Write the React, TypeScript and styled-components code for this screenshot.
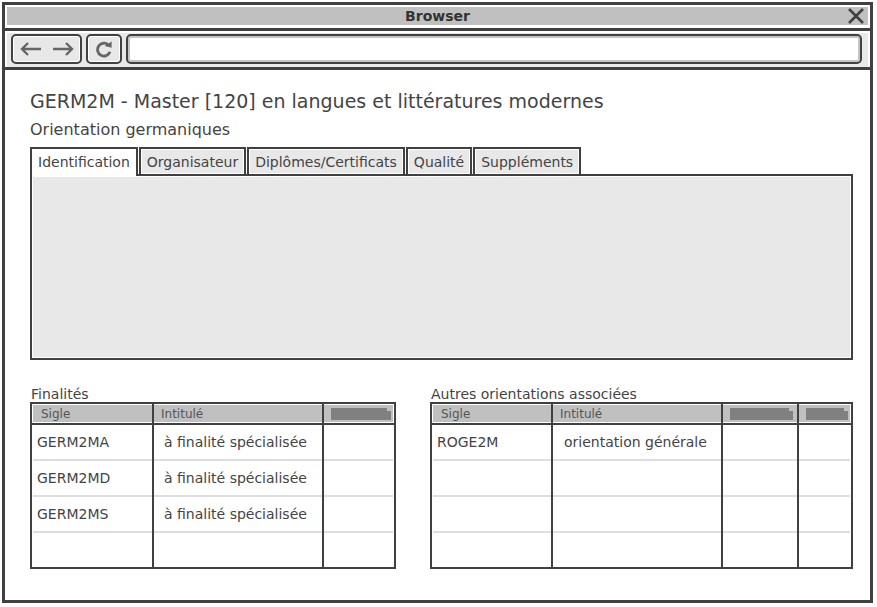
import React from 'react';
import styled, { createGlobalStyle } from 'styled-components';

const GlobalStyle = createGlobalStyle`
  html, body {
    margin: 0;
    padding: 0;
    background: #fff;
    font-family: "DejaVu Sans", Verdana, sans-serif;
    color: #444;
  }
`;

const DARK = '#404040';

const SFrame = styled.div`
  margin: 2px;
  width: 871px;
  height: 601px;
  box-sizing: border-box;
  border: 3px solid ${DARK};
  display: flex;
  flex-direction: column;
  background: #fff;
`;

const STitleBar = styled.div`
  padding: 2px 2px 3px;
  border-bottom: 3px solid ${DARK};
`;

const STitleInner = styled.div`
  height: 18px;
  background: #c0c0c0;
  display: grid;
  grid-template-columns: 1fr auto 1fr;
  align-items: center;
  font-size: 14px;
  font-weight: bold;
  color: #333;
`;

const SClose = styled.svg`
  justify-self: end;
  margin-right: 3px;
`;

const SNavBar = styled.div`
  padding: 2px 2px 0;
  border-bottom: 3px solid ${DARK};
`;

const SNavInner = styled.div`
  height: 34px;
  box-sizing: border-box;
  background: #e8e8e8;
  padding: 1px 6px 3px 4px;
  display: flex;
  gap: 4px;
`;

const SNavButton = styled.div<{ $w: number }>`
  width: ${({ $w }) => $w}px;
  height: 30px;
  box-sizing: border-box;
  border: 2px solid ${DARK};
  border-radius: 5px;
  background: #e8e8e8;
  box-shadow: inset 0 0 0 1px #fff;
  display: flex;
  align-items: center;
  justify-content: center;
  gap: 10px;
`;

const SUrl = styled.div`
  flex: 1;
  height: 30px;
  box-sizing: border-box;
  border: 2px solid ${DARK};
  border-radius: 5px;
  background: #fff;
  box-shadow: inset 0 0 0 2px #c4c4c4;
`;

const SContent = styled.div`
  flex: 1;
  display: flex;
  flex-direction: column;
  padding: 20px 17px 0 25px;
`;

const STitle = styled.h1`
  margin: 0;
  font-size: 19px;
  line-height: 23px;
  font-weight: normal;
  color: #444;
`;

const SSubtitle = styled.div`
  margin-top: 7px;
  font-size: 16px;
  line-height: 19px;
`;

const STabs = styled.div`
  margin-top: 8px;
  display: flex;
  gap: 1px;
  position: relative;
  z-index: 1;
  margin-bottom: -2px;
`;

const STab = styled.div<{ $active?: boolean }>`
  height: 29px;
  box-sizing: border-box;
  padding: 0 6px ${({ $active }) => ($active ? '2px' : '0')};
  border: 2px solid ${DARK};
  border-bottom: ${({ $active }) => ($active ? 'none' : `2px solid ${DARK}`)};
  background: ${({ $active }) => ($active ? '#fff' : '#e8e8e8')};
  box-shadow: ${({ $active }) => ($active ? 'none' : 'inset 0 0 0 1px #fff')};
  display: flex;
  align-items: center;
  font-size: 14px;
`;

const SPanel = styled.div`
  height: 186px;
  box-sizing: border-box;
  border: 2px solid ${DARK};
  background: #e8e8e8;
  box-shadow: inset 0 0 0 1px #fff;
`;

const SGrids = styled.div`
  margin-top: 26px;
  display: grid;
  grid-template-columns: 366px 423px;
  column-gap: 34px;
`;

const SLabel = styled.div`
  font-size: 14px;
  line-height: 16px;
  padding-left: 1px;
`;

const STable = styled.div<{ $w: number }>`
  width: ${({ $w }) => $w}px;
  height: 167px;
  box-sizing: border-box;
  border: 2px solid ${DARK};
  display: flex;
  flex-direction: column;
`;

const SHeader = styled.div<{ $cols: string }>`
  height: 21px;
  box-sizing: border-box;
  padding: 0 1px;
  display: grid;
  grid-template-columns: ${({ $cols }) => $cols};
  background: #c0c0c0;
  box-shadow: inset 0 0 0 1px #fff;
  border-bottom: 2px solid ${DARK};
`;

const SHeadCell = styled.div<{ $last?: boolean; $pad: number }>`
  border-right: ${({ $last }) => ($last ? 'none' : `2px solid ${DARK}`)};
  padding: 3px 0 0 ${({ $pad }) => $pad}px;
  font-size: 12px;
  line-height: 15px;
  color: #555;
  white-space: nowrap;
`;

const SHeadBar = styled.div<{ $w: number }>`
  width: ${({ $w }) => $w}px;
  height: 12px;
  margin-top: 1px;
  background: #808080;
  clip-path: polygon(0 0, calc(100% - 4px) 0, calc(100% - 4px) 3px, 100% 3px, 100% 100%, 0 100%);
`;

const SBody = styled.div<{ $cols: string }>`
  padding: 0 1px;
  display: grid;
  grid-template-columns: ${({ $cols }) => $cols};
  grid-template-rows: 36px 36px 36px 34px;
`;

const SCell = styled.div<{ $last?: boolean; $sep?: boolean; $pad: number }>`
  border-right: ${({ $last }) => ($last ? 'none' : `2px solid ${DARK}`)};
  background: ${({ $sep }) => ($sep ? 'linear-gradient(#dedede, #dedede) left bottom / 100% 2px no-repeat' : 'none')};
  padding: 9px 0 0 ${({ $pad }) => $pad}px;
  font-size: 14px;
  line-height: 16px;
  white-space: nowrap;
`;

type Column = { title?: string; bar?: number; pad: number; headPad: number };

const leftColumns: Column[] = [
  { title: 'Sigle', pad: 4, headPad: 8 },
  { title: 'Intitulé', pad: 10, headPad: 7 },
  { bar: 60, pad: 4, headPad: 7 },
];

const rightColumns: Column[] = [
  { title: 'Sigle', pad: 4, headPad: 8 },
  { title: 'Intitulé', pad: 11, headPad: 7 },
  { bar: 63, pad: 4, headPad: 7 },
  { bar: 42, pad: 4, headPad: 7 },
];

function DataTable({ width, cols, columns, rows }: {
  width: number; cols: string; columns: Column[]; rows: string[][];
}) {
  const filled = [...rows];
  while (filled.length < 4) filled.push([]);

  return (
    <STable $w={width}>
      <SHeader $cols={cols}>
        {columns.map((c, i) => (
          <SHeadCell key={i} $pad={c.headPad} $last={i === columns.length - 1}>
            {c.bar ? <SHeadBar $w={c.bar} /> : c.title}
          </SHeadCell>
        ))}
      </SHeader>
      <SBody $cols={cols}>
        {filled.map((row, r) => columns.map((c, i) => (
          <SCell
            key={`${r}-${i}`}
            $pad={c.pad}
            $last={i === columns.length - 1}
            $sep={r < 3}
          >
            {row[i] ?? ''}
          </SCell>
        )))}
      </SBody>
    </STable>
  );
}

const tabs = ['Identification', 'Organisateur', 'Diplômes/Certificats', 'Qualité', 'Suppléments'];

export default function App() {
  return (
    <>
      <GlobalStyle />
      <SFrame>
        <STitleBar>
          <STitleInner>
            <span />
            <span>Browser</span>
            <SClose width="18" height="16" viewBox="0 0 18 16">
              <path d="M2 1 L16 15 M16 1 L2 15" stroke="#404040" strokeWidth="2.6" fill="none" />
            </SClose>
          </STitleInner>
        </STitleBar>
        <SNavBar>
          <SNavInner>
            <SNavButton $w={71}>
              <svg width="22" height="14" viewBox="0 0 22 14">
                <path d="M21 7 H2 M8 1 L2 7 L8 13" stroke="#666" strokeWidth="2.4" fill="none" />
              </svg>
              <svg width="22" height="14" viewBox="0 0 22 14">
                <path d="M1 7 H20 M14 1 L20 7 L14 13" stroke="#666" strokeWidth="2.4" fill="none" />
              </svg>
            </SNavButton>
            <SNavButton $w={36}>
              <svg width="18" height="18" viewBox="0 0 18 18">
                <path d="M13.4 5 A6.4 6.4 0 1 0 15 11.8" stroke="#666" strokeWidth="2.8" fill="none" />
                <path d="M9.6 6 L16.6 1.6 L16.6 7.8 Z" fill="#666" />
              </svg>
            </SNavButton>
            <SUrl />
          </SNavInner>
        </SNavBar>
        <SContent>
          <STitle>GERM2M - Master [120] en langues et littératures modernes</STitle>
          <SSubtitle>Orientation germaniques</SSubtitle>
          <STabs>
            {tabs.map((t, i) => (
              <STab key={t} $active={i === 0}>{t}</STab>
            ))}
          </STabs>
          <SPanel />
          <SGrids>
            <div>
              <SLabel>Finalités</SLabel>
              <DataTable
                width={366}
                cols="121px 170px 69px"
                columns={leftColumns}
                rows={[
                  ['GERM2MA', 'à finalité spécialisée'],
                  ['GERM2MD', 'à finalité spécialisée'],
                  ['GERM2MS', 'à finalité spécialisée'],
                ]}
              />
            </div>
            <div>
              <SLabel>Autres orientations associées</SLabel>
              <DataTable
                width={423}
                cols="120px 170px 76px 51px"
                columns={rightColumns}
                rows={[['ROGE2M', 'orientation générale']]}
              />
            </div>
          </SGrids>
        </SContent>
      </SFrame>
    </>
  );
}
